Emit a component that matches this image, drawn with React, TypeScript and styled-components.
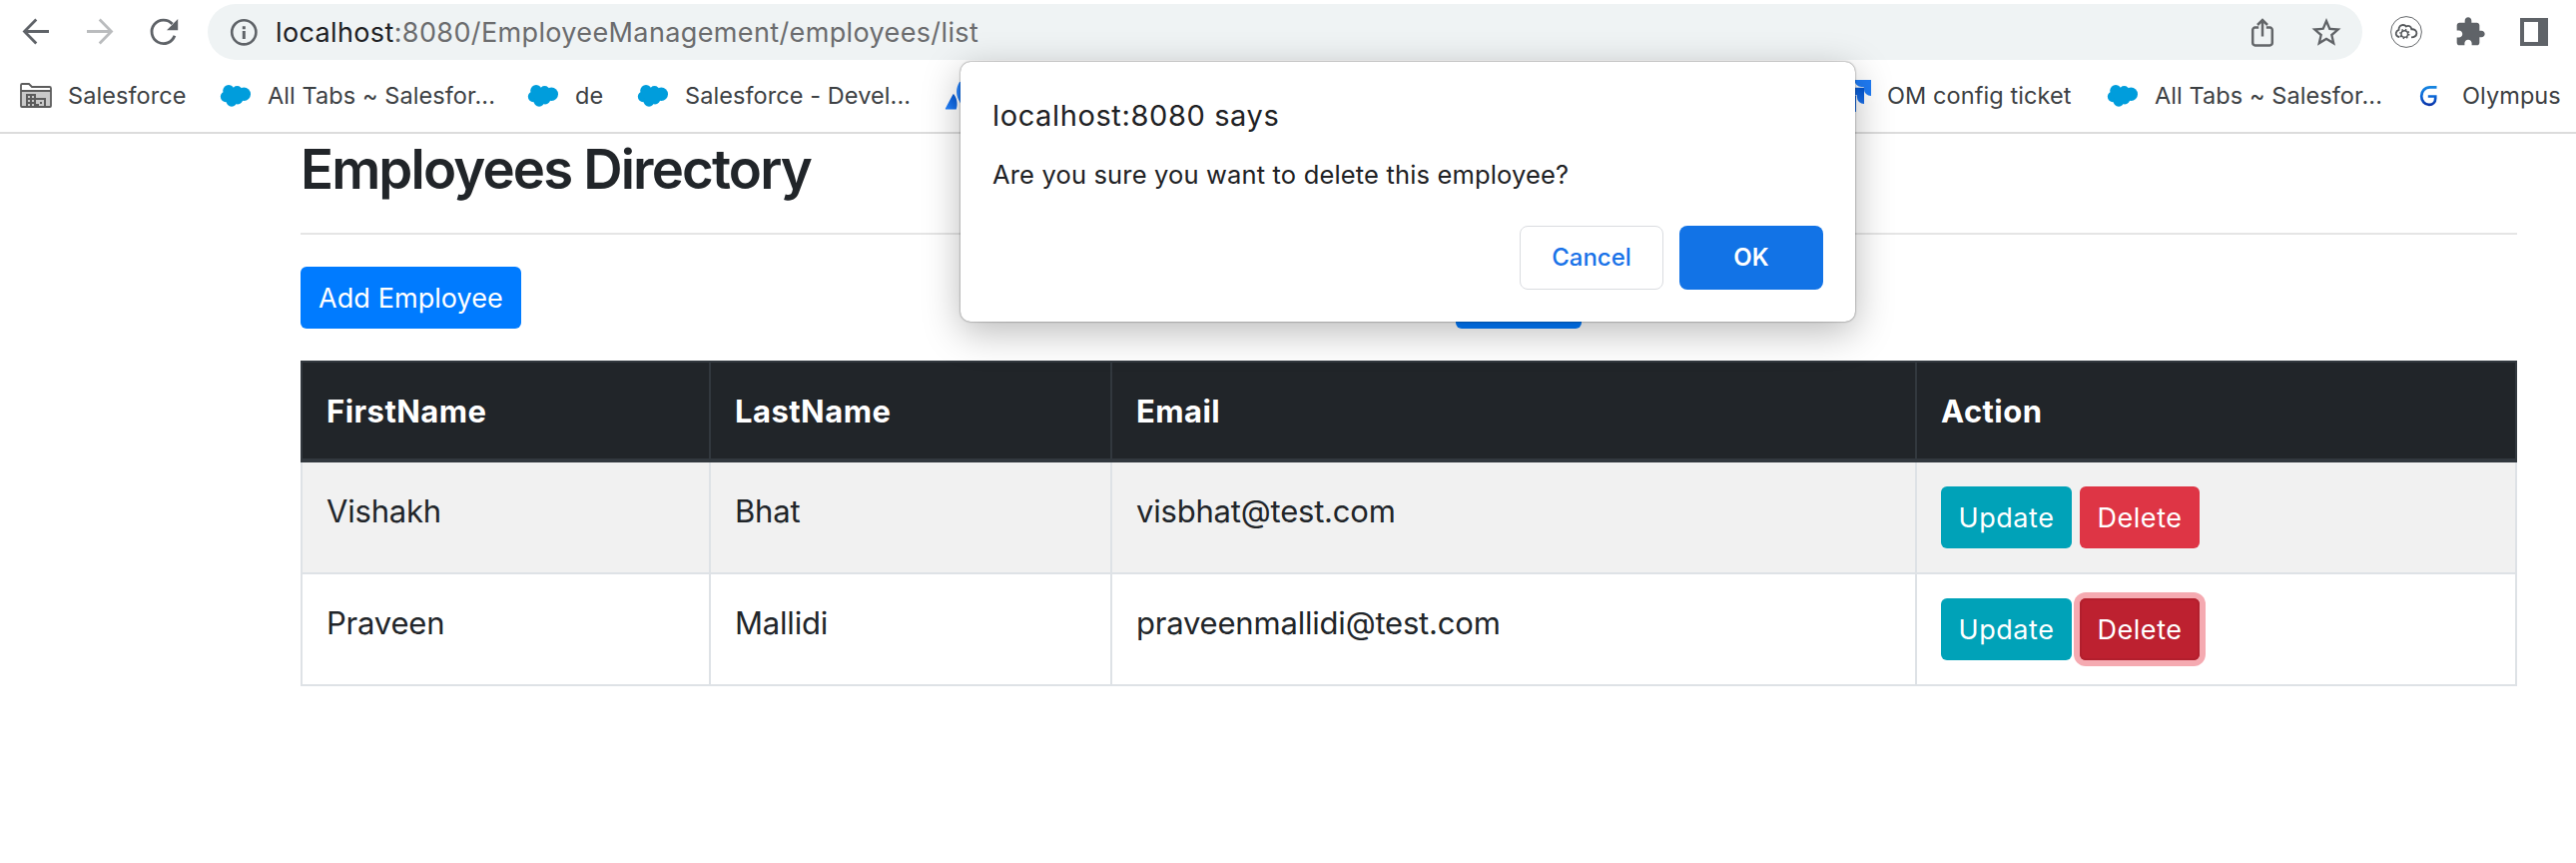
import React from "react";
import styled, { createGlobalStyle } from "styled-components";

const GlobalStyle = createGlobalStyle`
  *, *::before, *::after { box-sizing: border-box; }
  body {
    margin: 0;
    background: #fff;
    color: #212529;
    font-family: Inter, "Liberation Sans", sans-serif;
    overflow: hidden;
  }
`;

const Window = styled.div`
  position: relative;
  width: 2580px;
  height: 864px;
  background: #fff;
  overflow: hidden;
`;

const Toolbar = styled.header`
  display: flex;
  align-items: center;
  height: 64px;
  padding: 0 26px 0 20px;
`;

const IconGroup = styled.div`
  display: flex;
  align-items: center;
  gap: 32px;
`;

const Icon = styled.svg`
  display: block;
  flex: none;
  width: 32px;
  height: 32px;
`;

const AddressBar = styled.div`
  display: flex;
  flex: 1;
  align-items: center;
  height: 56px;
  margin: 0 28px;
  padding: 0 20px;
  border-radius: 28px;
  background: #eff3f4;
`;

const Url = styled.div`
  flex: 1;
  margin-left: 16px;
  padding-top: 1px;
  color: #6b6c6e;
  font-size: 27px;
  letter-spacing: 0.37px;
  line-height: 36px;
`;

const Host = styled.span`
  color: #202124;
`;

const BookmarksBar = styled.nav`
  display: flex;
  align-items: center;
  height: 70px;
  padding: 0 0 4px 20px;
  border-bottom: 2px solid #dcdcdc;
`;

const BookmarkItem = styled.div<{ $width: number }>`
  display: flex;
  flex: none;
  align-items: center;
  gap: 16px;
  width: ${(p) => p.$width}px;
`;

const BookmarkLabel = styled.span`
  color: #3c4043;
  font-size: 23.5px;
  letter-spacing: 0.08px;
  line-height: 30px;
  white-space: nowrap;
`;

const Page = styled.main`
  width: 2220px;
  margin-left: 301px;
`;

const Title = styled.h3`
  margin: 0 0 30px;
  padding-top: 2px;
  font-size: 54.5px;
  font-weight: 600;
  letter-spacing: -1.85px;
  line-height: 67px;
`;

const Rule = styled.hr`
  height: 2px;
  margin: 0 0 32px;
  border: 0;
  background: #e5e5e5;
`;

const Actions = styled.div`
  display: flex;
  margin-bottom: 32px;
`;

const colors = {
  primary: "#007bff",
  info: "#00a2b8",
  danger: "#de3545",
};

const Button = styled.button<{
  $tone: keyof typeof colors;
  $width: number;
  $tight?: boolean;
  $active?: boolean;
}>`
  display: block;
  width: ${(p) => p.$width}px;
  height: 62px;
  padding: 1px 0 0;
  border: 0;
  border-radius: 6px;
  background: ${(p) => (p.$active ? "#bd2130" : colors[p.$tone])};
  box-shadow: ${(p) =>
    p.$active ? "0 0 0 6px #f5aab1, inset 0 0 0 2px #b21f2d" : "none"};
  color: #fff;
  font-family: inherit;
  font-size: 27px;
  letter-spacing: ${(p) => (p.$tight ? 0.07 : 0.55)}px;
  line-height: 42px;
  text-align: center;
`;

const SearchSlot = styled.div`
  margin-left: 936px;
`;

const Table = styled.table`
  width: 2220px;
  table-layout: fixed;
  border-collapse: separate;
  border-spacing: 0;
`;

const Column = styled.col<{ $width: number }>`
  width: ${(p) => p.$width}px;
`;

const HeadCell = styled.th`
  height: 102px;
  padding: 2px 24px 0;
  border: solid #32383e;
  border-width: 2px 0 4px 2px;
  background: #212529;
  color: #fff;
  font-size: 31px;
  font-weight: 700;
  letter-spacing: 0.45px;
  line-height: 48px;
  text-align: left;
  &:last-child { border-right-width: 2px; }
`;

const Cell = styled.td`
  height: 112px;
  padding: 24px;
  border: solid #dee2e6;
  border-width: 0 0 2px 2px;
  font-size: 31px;
  letter-spacing: -0.2px;
  line-height: 49px;
  vertical-align: top;
  &:last-child { border-right-width: 2px; }
`;

const Row = styled.tr<{ $striped: boolean }>`
  background: ${(p) => (p.$striped ? "#f1f1f1" : "#fff")};
`;

const RowActions = styled.div`
  display: flex;
  gap: 8px;
`;

const Dialog = styled.section`
  position: absolute;
  top: 62px;
  left: 962px;
  width: 896px;
  height: 260px;
  padding: 34px 32px 32px;
  border-radius: 10px;
  background: #fff;
  box-shadow: 0 0 2px rgba(0, 0, 0, 0.6), 0 10px 38px rgba(0, 0, 0, 0.28);
  color: #202124;
`;

const DialogTitle = styled.h1`
  margin: 0 0 23px;
  font-size: 29px;
  font-weight: 400;
  letter-spacing: 0.62px;
  line-height: 40px;
`;

const DialogText = styled.p`
  margin: 0 0 35px;
  font-size: 25.5px;
  letter-spacing: 0.16px;
  line-height: 32px;
`;

const DialogButtons = styled.div`
  display: flex;
  justify-content: flex-end;
  gap: 16px;
`;

const DialogButton = styled.button<{ $primary?: boolean }>`
  width: 144px;
  height: 64px;
  padding: 0;
  border: ${(p) => (p.$primary ? "0" : "1px solid #dadce0")};
  border-radius: 8px;
  background: ${(p) => (p.$primary ? "#1273e6" : "#fff")};
  color: ${(p) => (p.$primary ? "#fff" : "#1a73e8")};
  font-family: inherit;
  font-size: 24px;
  font-weight: ${(p) => (p.$primary ? 600 : 500)};
  line-height: 30px;
`;

const BackIcon = () => (
  <Icon viewBox="0 0 32 32" fill="none" stroke="#5f6368" strokeWidth="2.8">
    <path d="M29 15.5H4.5M16.3 3.6 4.5 15.500l11.800 11.900" />
  </Icon>
);

const ForwardIcon = () => (
  <Icon viewBox="0 0 32 32" fill="none" stroke="#babcbe" strokeWidth="2.8">
    <path d="M3 15.5h24.5M15.7 3.6l11.8 11.9-11.8 11.9" />
  </Icon>
);

const ReloadIcon = () => (
  <Icon viewBox="0 0 32 32">
    <path
      d="M26.9 19.8A11.8 11.8 0 1 1 24.6 8"
      fill="none"
      stroke="#5f6368"
      strokeWidth="2.8"
    />
    <path d="M30.2 3v11.2H19z" fill="#5f6368" />
  </Icon>
);

const InfoIcon = () => (
  <Icon viewBox="0 0 32 32">
    <circle cx="16.3" cy="16.3" r="12.1" fill="none" stroke="#5f6368" strokeWidth="2.6" />
    <path d="M14.8 10.2h3v3h-3zM14.8 15h3v8h-3z" fill="#5f6368" />
  </Icon>
);

const ShareIcon = () => (
  <Icon viewBox="0 0 32 32" fill="none" stroke="#636669" strokeWidth="2.5">
    <path d="M16 20.5V4.2M11 9l5-5 5 5" />
    <path d="M12.2 11.6H8.6a2.4 2.4 0 0 0-2.4 2.4v13a2.4 2.4 0 0 0 2.4 2.4h14.8a2.4 2.4 0 0 0 2.4-2.4V14a2.4 2.4 0 0 0-2.4-2.4h-3.6" />
  </Icon>
);

const StarIcon = () => (
  <Icon viewBox="1 0.6 22 22" fill="#606367">
    <path d="M22 9.24l-7.19-.62L12 2 9.19 8.63 2 9.24l5.46 4.73L5.82 21 12 17.27 18.18 21l-1.63-7.03L22 9.24zM12 15.4l-3.76 2.27 1-4.28-3.32-2.88 4.38-.38L12 6.1l1.71 4.04 4.38.38-3.32 2.88 1 4.28L12 15.4z" />
  </Icon>
);

const CloudGearIcon = () => (
  <Icon viewBox="0 0 32 32" fill="none" stroke="#55585b">
    <circle cx="16" cy="16" r="15.4" strokeWidth="0.9" />
    <path
      d="M9.3 21.2C6.700 20.800 5.400 19 5.800 16.800c.3-1.700 1.500-2.600 2.700-3-.1-3 2-4.900 4.300-4.800 1.500.1 2.500.7 3.100 1.500 2.600-1.400 5.100 0 5.400 2.800 3-.3 5.200 1.500 5.100 4.100-.2 2.400-1.900 3.900-5.400 3.900"
      strokeWidth="1.8"
    />
    <circle cx="14.3" cy="18" r="3.3" strokeWidth="1.5" />
    <circle cx="14.3" cy="18" r="4.5" strokeWidth="1.4" strokeDasharray="1.5 2.034" />
  </Icon>
);

const PuzzleIcon = () => (
  <Icon viewBox="0 0 24 24" fill="#5f6368">
    <path d="M20.5 11H19V7c0-1.1-.9-2-2-2h-4V3.5C13 2.12 11.88 1 10.5 1S8 2.12 8 3.5V5H4c-1.1 0-1.99.9-1.99 2v3.8H3.5c1.49 0 2.7 1.21 2.7 2.7s-1.21 2.7-2.7 2.7H2V20c0 1.1.9 2 2 2h3.8v-1.5c0-1.49 1.21-2.7 2.7-2.7 1.49 0 2.7 1.21 2.7 2.7V22H17c1.1 0 2-.9 2-2v-4h1.5c1.38 0 2.5-1.12 2.5-2.5S21.88 11 20.5 11z" />
  </Icon>
);

const SidePanelIcon = () => (
  <Icon viewBox="0 0 32 32">
    <path d="M2 2h28v28H2zM6 6v20h14V6z" fill="#5f6368" fillRule="evenodd" />
  </Icon>
);

const FolderIcon = () => (
  <Icon viewBox="0 0 32 32">
    <path d="M1 26V5.2C1 4.4 1.5 4 2.2 4H9l3 3h17.6c.9 0 1.4.5 1.4 1.4V26c0 .7-.4 1-1 1H2c-.6 0-1-.3-1-1z" fill="#fff" />
    <path d="M1 11h30v15.6H1z" fill="#c9c9c9" />
    <path
      d="M1 26V5.2C1 4.4 1.5 4 2.2 4H9l3 3h17.6c.9 0 1.4.5 1.4 1.4V26c0 .7-.4 1-1 1H2c-.6 0-1-.3-1-1zM1 11h30"
      fill="none"
      stroke="#5c5c5c"
      strokeWidth="1.8"
    />
    <path d="M6 14h10v4h10v9h-2v-7h-8v7H6z" fill="#5c5c5c" />
    <path d="M8 16h2v2H8zM12 16h2v2h-2zM8 20h2v2H8zM12 20h2v2h-2zM8 24h2v2H8zM12 24h2v2h-2z" fill="#c9c9c9" />
    <path d="M16 24h3v2h-3zM20 22h2v2h-2z" fill="#5c5c5c" />
  </Icon>
);

const CloudIcon = () => (
  <Icon viewBox="0 0 32 32" fill="#009ddc">
    <circle cx="9" cy="10.8" r="5.8" />
    <circle cx="17.5" cy="11" r="5" />
    <circle cx="24.3" cy="14.3" r="6.7" />
    <circle cx="6.2" cy="16.8" r="5.4" />
    <circle cx="12" cy="21.2" r="5.5" />
    <circle cx="18" cy="19" r="5.4" />
    <path d="M8 10h14v10H8z" />
  </Icon>
);

const AtlassianIcon = () => (
  <Icon viewBox="0 0 32 32">
    <defs>
      <linearGradient id="atlassian" x1="1" y1="0" x2="0.2" y2="1">
        <stop offset="0" stopColor="#0052cc" />
        <stop offset="1" stopColor="#2684ff" />
      </linearGradient>
    </defs>
    <path d="M8.4 14.6 0.9 28.4c-.2.5 0 1 .6 1h10.2c1.600-4 1.200-10.600-2.300-14.800-.3-.4-.7-.4-1 0z" fill="url(#atlassian)" />
    <path d="M14.9 2.3c-3.600 5.800-3.400 12.300-1 17.100l5 9.500c.2.4.5.5.9.5H30c.6 0 .8-.5.6-1L16.800 2.300c-.4-.8-1.400-.8-1.900 0z" fill="#2380fb" />
  </Icon>
);

const JiraIcon = () => (
  <Icon viewBox="0 0 32 32">
    <defs>
      <linearGradient id="jira" x1="1" y1="0" x2="0.4" y2="1">
        <stop offset="0" stopColor="#0052cc" />
        <stop offset="1" stopColor="#2179f5" />
      </linearGradient>
    </defs>
    <path d="M15.5 0H32v16a7.2 7.2 0 0 1-7.200-7.200V7h-2.500A7 7 0 0 1 15.500 0z" fill="#1f7cf6" />
    <path d="M7.8 7.8H25V24a7.2 7.2 0 0 1-7.200-7.200v-1.900h-2.700a7 7 0 0 1-7.300-7.100z" fill="url(#jira)" />
    <path d="M0 15.6h17V32a7.2 7.2 0 0 1-7.200-7.200v-2H7.200A7.200 7.200 0 0 1 0 15.600z" fill="url(#jira)" />
  </Icon>
);

const OlympusIcon = () => (
  <Icon viewBox="0 0 32 32" fill="none">
    <defs>
      <linearGradient id="olympus" gradientUnits="userSpaceOnUse" x1="0" y1="6" x2="0" y2="26">
        <stop offset="0" stopColor="#1787e0" />
        <stop offset="0.5" stopColor="#0a68d8" />
        <stop offset="1" stopColor="#0a2fa5" />
      </linearGradient>
    </defs>
    <path
      d="M22.500 7.400H15.800C10.600 7.400 7.200 11.300 7.200 16.200c0 4.900 3.300 8.600 7.700 8.600 3.700 0 6.300-2.700 6.300-6.400v-1.900h-7.400"
      stroke="url(#olympus)"
      strokeWidth="2.700"
    />
  </Icon>
);

const bookmarks = [
  { icon: <FolderIcon />, label: "Salesforce", width: 200 },
  { icon: <CloudIcon />, label: "All Tabs ~ Salesfor...", width: 308 },
  { icon: <CloudIcon />, label: "de", width: 110 },
  { icon: <CloudIcon />, label: "Salesforce - Devel...", width: 308 },
  { icon: <AtlassianIcon />, label: "", width: 896 },
  { icon: <JiraIcon />, label: "OM config ticket", width: 268 },
  { icon: <CloudIcon />, label: "All Tabs ~ Salesfor...", width: 308 },
  { icon: <OlympusIcon />, label: "Olympus", width: 150 },
];

const employees = [
  { first: "Vishakh", last: "Bhat", email: "visbhat@test.com" },
  { first: "Praveen", last: "Mallidi", email: "praveenmallidi@test.com" },
];

const pendingDelete = "praveenmallidi@test.com";

export default function App() {
  return (
    <>
      <GlobalStyle />
      <Window>
        <Toolbar>
          <IconGroup>
            <BackIcon />
            <ForwardIcon />
            <ReloadIcon />
          </IconGroup>
          <AddressBar>
            <InfoIcon />
            <Url>
              <Host>localhost</Host>:8080/EmployeeManagement/employees/list
            </Url>
            <IconGroup>
              <ShareIcon />
              <StarIcon />
            </IconGroup>
          </AddressBar>
          <IconGroup>
            <CloudGearIcon />
            <PuzzleIcon />
            <SidePanelIcon />
          </IconGroup>
        </Toolbar>

        <BookmarksBar>
          {bookmarks.map((b, i) => (
            <BookmarkItem key={i} $width={b.width}>
              {b.icon}
              {b.label && <BookmarkLabel>{b.label}</BookmarkLabel>}
            </BookmarkItem>
          ))}
        </BookmarksBar>

        <Page>
          <Title>Employees Directory</Title>
          <Rule />
          <Actions>
            <Button $tone="primary" $width={221} $tight>
              Add Employee
            </Button>
            <SearchSlot>
              <Button $tone="primary" $width={126} aria-label="Search" />
            </SearchSlot>
          </Actions>
          <Table>
            <colgroup>
              <Column $width={409} />
              <Column $width={402} />
              <Column $width={806} />
              <Column $width={603} />
            </colgroup>
            <thead>
              <tr>
                <HeadCell>FirstName</HeadCell>
                <HeadCell>LastName</HeadCell>
                <HeadCell>Email</HeadCell>
                <HeadCell>Action</HeadCell>
              </tr>
            </thead>
            <tbody>
              {employees.map((e, i) => (
                <Row key={e.email} $striped={i % 2 === 0}>
                  <Cell>{e.first}</Cell>
                  <Cell>{e.last}</Cell>
                  <Cell>{e.email}</Cell>
                  <Cell>
                    <RowActions>
                      <Button $tone="info" $width={131}>
                        Update
                      </Button>
                      <Button $tone="danger" $width={120} $active={e.email === pendingDelete}>
                        Delete
                      </Button>
                    </RowActions>
                  </Cell>
                </Row>
              ))}
            </tbody>
          </Table>
        </Page>

        <Dialog role="alertdialog">
          <DialogTitle>localhost:8080 says</DialogTitle>
          <DialogText>Are you sure you want to delete this employee?</DialogText>
          <DialogButtons>
            <DialogButton>Cancel</DialogButton>
            <DialogButton $primary>OK</DialogButton>
          </DialogButtons>
        </Dialog>
      </Window>
    </>
  );
}
